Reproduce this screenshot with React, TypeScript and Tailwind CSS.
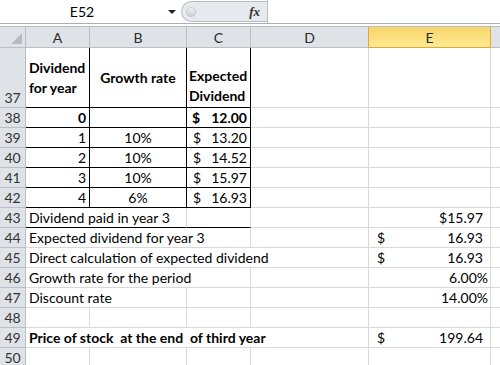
// Spreadsheet view: formula bar, headers and the dividend table (rows 37-50)
import React from 'react';

const font = { fontFamily: 'Lato, "Open Sans", sans-serif' };

// column widths incl. 1px right gridline
const W = { h: 'w-[26px]', A: 'w-[64px]', B: 'w-[97px]', C: 'w-[64px]', D: 'w-[118px]', E: 'w-[122px]' };

type CellProps = {
  w: string;
  black?: boolean;
  blackB?: boolean;
  className?: string;
  children?: React.ReactNode;
};

const Cell: React.FC<CellProps> = ({ w, black, blackB, className = '', children }) => (
  <div
    className={`${w} shrink-0 h-full flex items-center pt-px border-r border-b ${
      black ? 'border-r-black border-b-black' : 'border-r-[#d9d9d9] border-b-[#d9d9d9]'
    } ${blackB ? 'border-b-black' : ''} whitespace-nowrap overflow-visible ${className}`}
  >
    {children}
  </div>
);

const RowHead: React.FC<{ n: number; tall?: boolean }> = ({ n, tall }) => (
  <div
    className={`${W.h} shrink-0 h-full flex justify-center ${tall ? 'items-end pb-[2px]' : 'items-center pt-px'} bg-[#dfe3e8] border-r border-b border-[#b9bec6] text-[#333] text-[14px]`}
  >
    {n}
  </div>
);

const Acct: React.FC<{ v: string; bold?: boolean; pl: string; pr: string }> = ({ v, bold, pl, pr }) => (
  <div className={`w-full flex justify-between ${pl} ${pr} ${bold ? 'font-bold' : ''}`}>
    <span>$</span>
    <span>{v}</span>
  </div>
);

const tableRows = [
  { n: 39, a: '1', b: '10%', c: '13.20' },
  { n: 40, a: '2', b: '10%', c: '14.52' },
  { n: 41, a: '3', b: '10%', c: '15.97' },
  { n: 42, a: '4', b: '6%', c: '16.93' },
];

const Rest = () => <div className="flex-1 h-full border-b border-[#d9d9d9]" />;

const App: React.FC = () => {
  return (
    <div className="w-[500px] h-[365px] overflow-hidden bg-white text-black text-[14px] leading-none" style={font}>
      {/* formula bar */}
      <div className="h-[23px] flex">
        <div className="w-[181px] shrink-0 flex items-center relative">
          <span className="w-[164px] text-center text-[14px]">E52</span>
          <span className="absolute left-[168px] top-[10px] w-0 h-0 border-l-[4px] border-r-[4px] border-t-[4px] border-l-transparent border-r-transparent border-t-[#222]" />
        </div>
        <div className="w-[86px] shrink-0 h-[21px] mt-[1px] rounded-l-full bg-[#e6e9ed] border border-r-0 border-[#b8bcc3] flex items-center">
          <span className="ml-[4px] w-[10px] h-[10px] rounded-full bg-gradient-to-b from-[#f4f4f4] to-[#c9cdd2] border border-[#c3c7cc]" />
          <span className="ml-auto mr-[7px] italic font-bold text-[13px] text-[#333]" style={{ fontFamily: '"Liberation Serif", serif' }}>
            fx
          </span>
        </div>
        <div className="flex-1 border-l border-[#b8bcc3] bg-white" />
      </div>
      <div className="h-px bg-[#aab0b8]" />
      <div className="h-[2px] bg-white" />
      <div className="h-px bg-[#b6bcc4]" />

      {/* column headers */}
      <div className="h-[21px] flex text-[14px] text-[#2a2a2a]">
        <div className={`${W.h} shrink-0 h-full bg-[#dfe3e8] border-r border-b border-[#b9bec6] relative`}>
          <svg className="absolute right-[3px] bottom-[3px]" width="11" height="11" viewBox="0 0 11 11">
            <polygon points="11,0 11,11 0,11" fill="#b7bcc3" />
          </svg>
        </div>
        {(['A', 'B', 'C', 'D'] as const).map((c) => (
          <div key={c} className={`${W[c]} shrink-0 h-full flex items-center justify-center pt-px bg-[#dfe3e8] border-r border-b border-[#b9bec6]`}>
            {c}
          </div>
        ))}
        <div className="w-[123px] -ml-px shrink-0 h-full flex items-center justify-center pt-px bg-gradient-to-b from-[#f9d46a] to-[#ffeb90] border-r border-b border-l border-[#e2a73c]">
          E
        </div>
        <div className="flex-1 h-full bg-[#dfe3e8] border-b border-[#b9bec6]" />
      </div>

      {/* row 37: table header */}
      <div className="h-[60px] flex">
        <RowHead n={37} tall />
        <Cell w={W.A} black className="font-bold pl-[3px] leading-[20px]">
          <div>
            Dividend
            <br />
            for year
          </div>
        </Cell>
        <Cell w={W.B} black className="font-bold justify-center">
          Growth rate
        </Cell>
        <Cell w={W.C} black className="font-bold items-end pl-[2px] leading-[20px] pb-[1px]">
          <div>
            Expected
            <br />
            Dividend
          </div>
        </Cell>
        <Cell w={W.D} />
        <Cell w={W.E} />
        <Rest />
      </div>

      {/* row 38 */}
      <div className="h-[20px] flex">
        <RowHead n={38} />
        <Cell w={W.A} black className="justify-end pr-[3px] font-bold">
          0
        </Cell>
        <Cell w={W.B} black />
        <Cell w={W.C} black>
          <Acct v="12.00" bold pl="pl-[5px]" pr="pr-[3px]" />
        </Cell>
        <Cell w={W.D} />
        <Cell w={W.E} />
        <Rest />
      </div>

      {tableRows.map((r) => (
        <div key={r.n} className="h-[20px] flex">
          <RowHead n={r.n} />
          <Cell w={W.A} black className="justify-end pr-[3px]">
            {r.a}
          </Cell>
          <Cell w={W.B} black className="justify-center">
            {r.b}
          </Cell>
          <Cell w={W.C} black>
            <Acct v={r.c} pl="pl-[6px]" pr="pr-[3px]" />
          </Cell>
          <Cell w={W.D} />
          <Cell w={W.E} />
          <Rest />
        </div>
      ))}

      {/* row 43 */}
      <div className="h-[20px] flex">
        <RowHead n={43} />
        <Cell w="w-[161px]" blackB className="pl-[3px]">
          Dividend paid in year 3
        </Cell>
        <Cell w={W.C} blackB />
        <Cell w={W.D} />
        <Cell w={W.E} className="justify-end pr-[7px]">
          $15.97
        </Cell>
        <Rest />
      </div>

      {/* row 44 */}
      <div className="h-[20px] flex">
        <RowHead n={44} />
        <Cell w="w-[225px]" className="pl-[3px]">
          Expected dividend for year 3
        </Cell>
        <Cell w={W.D} />
        <Cell w={W.E}>
          <Acct v="16.93" pl="pl-[8px]" pr="pr-[7px]" />
        </Cell>
        <Rest />
      </div>

      {/* row 45 */}
      <div className="h-[20px] flex">
        <RowHead n={45} />
        <Cell w="w-[343px]" className="pl-[3px]">
          Direct calculation of expected dividend
        </Cell>
        <Cell w={W.E}>
          <Acct v="16.93" pl="pl-[8px]" pr="pr-[7px]" />
        </Cell>
        <Rest />
      </div>

      {/* row 46 */}
      <div className="h-[20px] flex">
        <RowHead n={46} />
        <Cell w="w-[225px]" className="pl-[3px]">
          Growth rate for the period
        </Cell>
        <Cell w={W.D} />
        <Cell w={W.E} className="justify-end pr-[2px]">
          6.00%
        </Cell>
        <Rest />
      </div>

      {/* row 47 */}
      <div className="h-[20px] flex">
        <RowHead n={47} />
        <Cell w="w-[161px]" className="pl-[3px]">
          Discount rate
        </Cell>
        <Cell w={W.C} />
        <Cell w={W.D} />
        <Cell w={W.E} className="justify-end pr-[2px]">
          14.00%
        </Cell>
        <Rest />
      </div>

      {/* row 48 */}
      <div className="h-[20px] flex">
        <RowHead n={48} />
        <Cell w={W.A} />
        <Cell w={W.B} />
        <Cell w={W.C} />
        <Cell w={W.D} />
        <Cell w={W.E} />
        <Rest />
      </div>

      {/* row 49 */}
      <div className="h-[20px] flex">
        <RowHead n={49} />
        <Cell w="w-[343px]" className="pl-[3px] font-bold">
          Price of stock&nbsp; at the end&nbsp; of third year
        </Cell>
        <Cell w={W.E}>
          <Acct v="199.64" pl="pl-[8px]" pr="pr-[7px]" />
        </Cell>
        <Rest />
      </div>

      {/* row 50 */}
      <div className="h-[20px] flex">
        <RowHead n={50} />
        <Cell w={W.A} />
        <Cell w={W.B} />
        <Cell w={W.C} />
        <Cell w={W.D} />
        <Cell w={W.E} />
        <Rest />
      </div>
    </div>
  );
};

export default App;
